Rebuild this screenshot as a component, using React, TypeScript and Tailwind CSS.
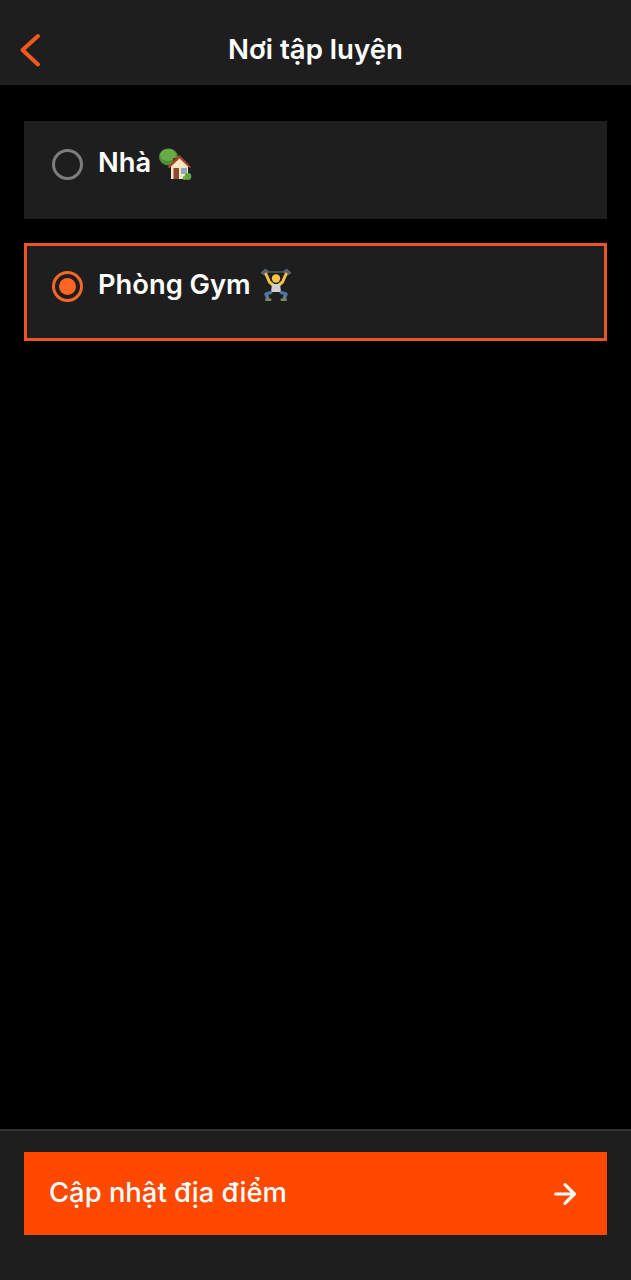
import { ArrowRight } from "lucide-react"

const HouseEmoji = () => (
    <svg width="34" height="34" viewBox="0 0 34 34" className="shrink-0">
        {/* tree */}
        <ellipse cx="10.5" cy="11" rx="9.5" ry="8.5" fill="#4f8f35" />
        <ellipse cx="10" cy="9" rx="8" ry="6" fill="#69ab48" />
        <rect x="15" y="12" width="5" height="5" fill="#5a3a22" />
        {/* house */}
        <path d="M12 21 L21.5 11 L31 21 L30 21 L30 33 L13 33 L13 21 Z" fill="#f5e6c4" />
        <path d="M9.5 21 L21.5 9 L33 21 L31.5 22 L21.5 12.5 L11.5 22 Z" fill="#a8452f" />
        <rect x="15.5" y="22" width="5.5" height="11" fill="#8a4a35" />
        <rect x="23" y="22" width="6" height="6" fill="#8fa9b5" />
        {/* bush */}
        <circle cx="30" cy="30.5" r="3.4" fill="#5ea53c" />
        <circle cx="26.5" cy="32" r="2" fill="#6fb04a" />
    </svg>
)

const LifterEmoji = () => (
    <svg width="34" height="34" viewBox="0 0 34 34" className="shrink-0">
        {/* bar and plates */}
        <path d="M4 4 L30 4" stroke="#555d66" strokeWidth="1.4" />
        <path d="M1.5 5 L6 0.5 L10 3 L6 8 Z" fill="#59616b" />
        <path d="M32.5 5 L28 0.5 L24 3 L28 8 Z" fill="#59616b" />
        {/* arms */}
        <path d="M7 6 L10.5 14 L14 17" stroke="#f2c14a" strokeWidth="3" fill="none" strokeLinecap="round" />
        <path d="M27 6 L23.5 14 L20 17" stroke="#f2c14a" strokeWidth="3" fill="none" strokeLinecap="round" />
        {/* head and torso */}
        <circle cx="17" cy="10.5" r="4.2" fill="#f6c544" />
        <path d="M13 16 L21 16 L22 24 L12 24 Z" fill="#cfd2cf" />
        {/* legs */}
        <path d="M13 24 L7 26 L9 31" stroke="#4f78a5" strokeWidth="3.4" fill="none" strokeLinejoin="round" />
        <path d="M21 24 L27 26 L25 31" stroke="#4f78a5" strokeWidth="3.4" fill="none" strokeLinejoin="round" />
        <rect x="6" y="30.5" width="6.5" height="2.5" rx="1" fill="#7d8a55" />
        <rect x="21.5" y="30.5" width="6.5" height="2.5" rx="1" fill="#7d8a55" />
    </svg>
)

export default function App() {
    return (
        <div className="h-[1280px] w-[631px] flex flex-col bg-black text-white font-['Inter','Liberation_Sans',sans-serif]">
            {/* Header */}
            <div className="relative h-[85px] shrink-0 bg-[#1e1e1e] flex items-center justify-center pt-[15px]">
                <svg width="24" height="36" viewBox="0 0 24 36" fill="none" className="absolute left-[18px] top-[32px]">
                    <path d="M20 4 L4.5 18 L20 32.5" stroke="#f4581f" strokeWidth="4" strokeLinecap="round" strokeLinejoin="round" />
                </svg>
                <h1 className="text-[27.6px] font-semibold leading-none">Nơi tập luyện</h1>
            </div>

            {/* Options */}
            <div className="flex-1 flex flex-col gap-6 px-6 pt-9">
                <div className="h-[98px] bg-[#1e1e1e] pl-[28px] pt-[28px] flex items-start gap-[15px]">
                    <span className="w-[31px] h-[31px] rounded-full border-[3px] border-[#7d7d7d] shrink-0" />
                    <div className="flex items-center gap-[7px] -mt-[3px] h-[34px]">
                        <span className="text-[27.3px] font-semibold leading-none">Nhà</span>
                        <HouseEmoji />
                    </div>
                </div>
                <div className="h-[98px] bg-[#1e1e1e] border-[3px] border-[#ee5423] pl-[25px] pt-[25px] flex items-start gap-[15px]">
                    <span className="w-[31px] h-[31px] rounded-full border-[3px] border-[#f4662a] shrink-0 flex items-center justify-center">
                        <span className="w-[17px] h-[17px] rounded-full bg-[#ff6425]" />
                    </span>
                    <div className="flex items-center gap-[8px] -mt-[3px] h-[34px]">
                        <span className="text-[27.3px] font-semibold leading-none">Phòng Gym</span>
                        <LifterEmoji />
                    </div>
                </div>
            </div>

            {/* Footer */}
            <div className="h-[151px] shrink-0 bg-[#1e1e1e] border-t-2 border-[#333333] px-6 pt-[21px]">
                <button className="w-full h-[83px] bg-[#ff4800] flex items-center justify-between pl-[25px] pr-[26px]">
                    <span className="text-[27.4px] font-medium leading-none -mt-[1px]">Cập nhật địa điểm</span>
                    <ArrowRight size={32} strokeWidth={2.4} />
                </button>
            </div>
        </div>
    )
}
